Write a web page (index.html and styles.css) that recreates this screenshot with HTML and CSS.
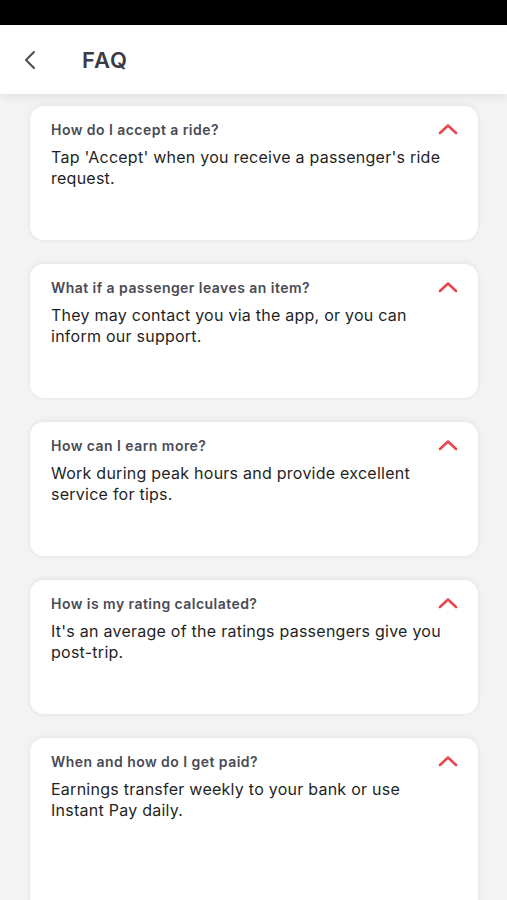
FILE: index.html
```html
<!DOCTYPE html>
<html>
<head>
<meta charset="utf-8">
<link rel="stylesheet" href="styles.css">
</head>
<body>
<div class="status"></div>
<header class="header">
  <svg class="back" width="14" height="20" viewBox="0 0 14 20"><path d="M11 2 L3 10 L11 18" fill="none" stroke="#4a4a52" stroke-width="2" stroke-linecap="round" stroke-linejoin="round"/></svg>
  <h1 class="title">FAQ</h1>
</header>
<main class="list">
  <section class="card">
    <div class="q-row"><span class="q">How do I accept a ride?</span><svg class="chev" width="20" height="12" viewBox="0 0 20 12"><path d="M2 10 L10 2.5 L18 10" fill="none" stroke="#e8474c" stroke-width="2.6" stroke-linecap="round" stroke-linejoin="round"/></svg></div>
    <p class="a">Tap 'Accept' when you receive a passenger's ride request.</p>
  </section>
  <section class="card">
    <div class="q-row"><span class="q">What if a passenger leaves an item?</span><svg class="chev" width="20" height="12" viewBox="0 0 20 12"><path d="M2 10 L10 2.5 L18 10" fill="none" stroke="#e8474c" stroke-width="2.6" stroke-linecap="round" stroke-linejoin="round"/></svg></div>
    <p class="a">They may contact you via the app, or you can inform our support.</p>
  </section>
  <section class="card">
    <div class="q-row"><span class="q">How can I earn more?</span><svg class="chev" width="20" height="12" viewBox="0 0 20 12"><path d="M2 10 L10 2.5 L18 10" fill="none" stroke="#e8474c" stroke-width="2.6" stroke-linecap="round" stroke-linejoin="round"/></svg></div>
    <p class="a">Work during peak hours and provide excellent service for tips.</p>
  </section>
  <section class="card">
    <div class="q-row"><span class="q">How is my rating calculated?</span><svg class="chev" width="20" height="12" viewBox="0 0 20 12"><path d="M2 10 L10 2.5 L18 10" fill="none" stroke="#e8474c" stroke-width="2.6" stroke-linecap="round" stroke-linejoin="round"/></svg></div>
    <p class="a">It's an average of the ratings passengers give you post-trip.</p>
  </section>
  <section class="card card-last">
    <div class="q-row"><span class="q">When and how do I get paid?</span><svg class="chev" width="20" height="12" viewBox="0 0 20 12"><path d="M2 10 L10 2.5 L18 10" fill="none" stroke="#e8474c" stroke-width="2.6" stroke-linecap="round" stroke-linejoin="round"/></svg></div>
    <p class="a">Earnings transfer weekly to your bank or use Instant Pay daily.</p>
  </section>
</main>
</body>
</html>
```

FILE: styles.css
```css
* { box-sizing: border-box; }
html, body { margin: 0; padding: 0; }
body {
  width: 507px;
  height: 900px;
  overflow: hidden;
  background: #f3f3f3;
  font-family: Inter, "Noto Sans", sans-serif;
  display: flex;
  flex-direction: column;
}
.status {
  flex: none;
  height: 25px;
  background: #000;
}
.header {
  flex: none;
  position: relative;
  z-index: 1;
  height: 69px;
  background: #fff;
  display: flex;
  align-items: center;
  padding-left: 23px;
  box-shadow: 0 3px 8px rgba(0,0,0,0.07);
}
.back { display: block; margin-top: 1px; }
.title {
  margin: 0 0 0 45px;
  font-size: 22px;
  font-weight: 600;
  color: #3b3b45;
  letter-spacing: 1px;
}
.list {
  flex: 1;
  min-height: 0;
  overflow: hidden;
  display: flex;
  flex-direction: column;
  gap: 24px;
  padding: 12px 29px 0 30px;
}
.card {
  flex: none;
  height: 134px;
  background: #fff;
  border-radius: 14px;
  padding: 13px 20px 0 21px;
  box-shadow: 0 -2px 6px rgba(0,0,0,0.05), 0 1px 4px rgba(0,0,0,0.04);
}
.card-last { height: 220px; }
.q-row {
  display: flex;
  align-items: center;
  justify-content: space-between;
  height: 20px;
}
.q {
  font-size: 14px;
  font-weight: 600;
  color: #4a4b55;
  letter-spacing: 0.45px;
}
.chev { display: block; margin-top: -1px; }
.a {
  margin: 8px 0 0;
  padding-right: 12px;
  font-size: 16px;
  line-height: 21px;
  color: #1f1f24;
  letter-spacing: 0.25px;
}
```
